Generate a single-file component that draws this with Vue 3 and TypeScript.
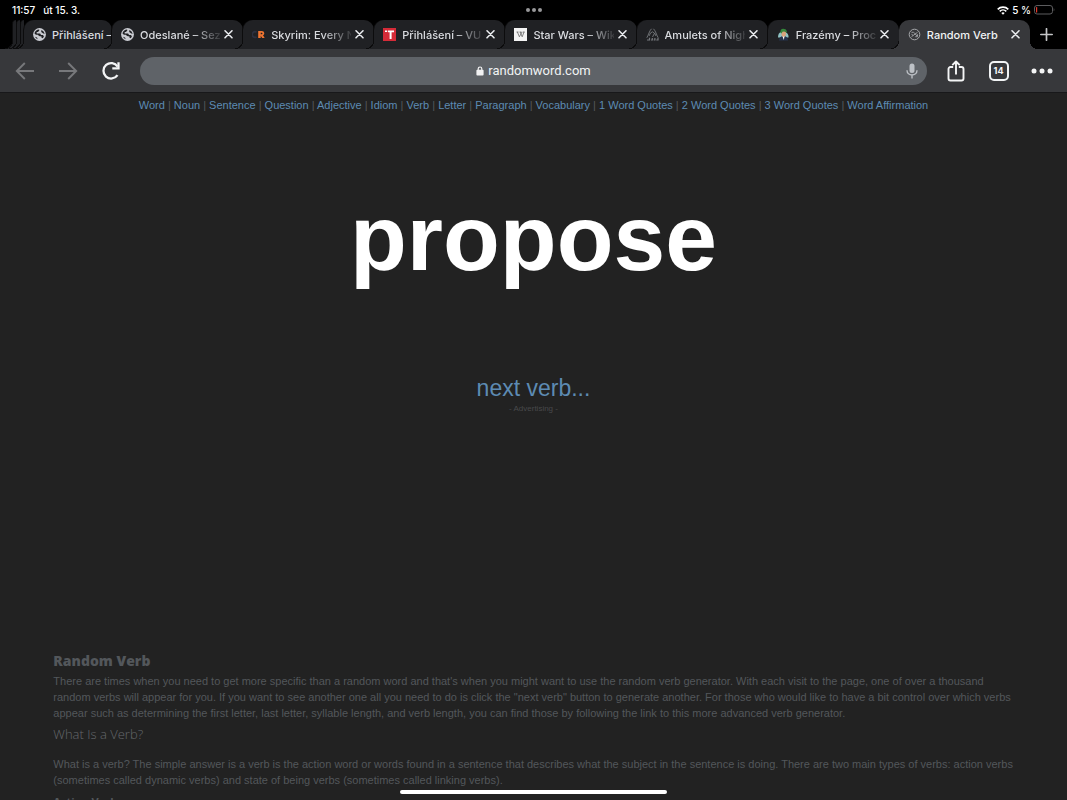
<script setup lang="ts">
import { ref } from 'vue'

interface Tab {
  id: number
  title: string
  icon: 'globe' | 'rank' | 't' | 'wiki' | 'amulet' | 'person' | 'verb'
}

const tabs: Tab[] = [
  { id: 1, title: 'Přihlášení –', icon: 'globe' },
  { id: 2, title: 'Odeslané – Sez', icon: 'globe' },
  { id: 3, title: 'Skyrim: Every N', icon: 'rank' },
  { id: 4, title: 'Přihlášení – VU', icon: 't' },
  { id: 5, title: 'Star Wars – Wik', icon: 'wiki' },
  { id: 6, title: 'Amulets of Nigh', icon: 'amulet' },
  { id: 7, title: 'Frazémy – Proc', icon: 'person' },
  { id: 8, title: 'Random Verb', icon: 'verb' },
]
const activeId = ref(8)
const address = ref('randomword.com')

const links: string[] = [
  'Word', 'Noun', 'Sentence', 'Question', 'Adjective', 'Idiom', 'Verb', 'Letter', 'Paragraph',
  'Vocabulary', '1 Word Quotes', '2 Word Quotes', '3 Word Quotes', 'Word Affirmation',
]
</script>

<template>
  <div class="screen">
    <div class="status">
      <div class="status-left"><span>11:57</span><span>út 15. 3.</span></div>
      <button class="multitask" type="button" aria-label="Multitasking"><i></i><i></i><i></i></button>
      <div class="status-right">
        <svg width="12" height="9" viewBox="0 0 12 9" fill="none" stroke="#fff" stroke-width="1.6">
          <path d="M.7 3.4C3.6.4 8.4.4 11.3 3.4" />
          <path d="M2.7 5.4c1.9-1.9 4.7-1.9 6.6 0" />
          <path d="M6 8.7 4.3 6.9c1-.9 2.400-.9 3.400 0z" fill="#fff" stroke="none" />
        </svg>
        <span>5 %</span>
        <svg width="21" height="10" viewBox="0 0 21 10" fill="none">
          <rect x=".5" y=".5" width="18" height="8.500" rx="2.500" stroke="#5c5c5e" />
          <rect x="2" y="2" width="1.200" height="5.500" rx=".5" fill="#e8392c" />
          <path d="M19.700 3.300v3c.9-.3.9-2.700 0-3z" fill="#5c5c5e" />
        </svg>
      </div>
    </div>

    <div class="tabs">
      <div class="stack"><i></i><i></i><i></i></div>
      <div
        v-for="tab in tabs"
        :key="tab.id"
        class="tab"
        :class="{ active: tab.id === activeId, first: tab.id === 1 }"
      >
        <button class="tab-main" type="button" @click="activeId = tab.id">
          <svg v-if="tab.icon === 'globe'" class="fav" viewBox="0 0 13 13">
            <circle cx="6.500" cy="6.500" r="6.400" fill="#c9cbd1" />
            <path d="M1.500 5.600C1.700 3.300 3.700 1.500 6.200 1.500v1.300L4.900 4.100H3.700v1.300h2.600c1.100 0 1.600.6 1.600 1.500H9.200c1 0 1.500.6 1.700 1.600L9.800 10.200 8.500 9.700V8.400L6 8.100 4.900 6.800H2.900z" fill="#202124" />
            <path d="M8.400 1.900c1.700.7 2.900 2.100 3.200 4L9.900 5.300 8.200 3.900zM2 8.700l2 .9.700 1.600C3.500 10.800 2.600 9.900 2 8.700z" fill="#202124" />
          </svg>
          <svg v-else-if="tab.icon === 'rank'" class="fav" viewBox="0 0 13 13">
            <path d="M4.500 4.200A2.800 2.800 0 1 0 4.500 9" fill="none" stroke="#2b3040" stroke-width="1.700" />
            <path d="M6.200 3h3.600c3 0 3.200 3.600 1.200 4.300L12.700 10h-2.500L8.700 7.800V10H6.200zm2.500 1.800v1.400h1c1 0 1-1.400 0-1.400z" fill="#ee7431" />
          </svg>
          <svg v-else-if="tab.icon === 't'" class="fav" viewBox="0 0 13 13">
            <rect width="13" height="13" fill="#d52b38" />
            <path d="M2 2.500h2.200v1.600H2zM5 2.500h6v1.700H8.600V11H6.600V4.200H5z" fill="#fff" />
          </svg>
          <svg v-else-if="tab.icon === 'wiki'" class="fav" viewBox="0 0 13 13">
            <rect width="13" height="13" fill="#f4f4f4" />
            <path d="M2.500 4h2M5.500 4h2M8.700 4h2M3.400 4l2 4.800L8 4M6.200 4l2 4.800L10 4" fill="none" stroke="#666" stroke-width=".8" />
          </svg>
          <svg v-else-if="tab.icon === 'amulet'" class="fav" viewBox="0 0 13 13" fill="none" stroke="#777a7e" stroke-width=".9">
            <path d="M5.500.8C3.300 3 2.500 7 .8 9.800M7.500.8c2.200 2.200 3 6.200 4.700 9M4.500 5l2-1.200 2 1.500L6.500 9M3 8l1.500-3M8.500 5 10 8" />
            <path d="M1 12h2.500V9.800M5 12h1.300v-2M7.700 12h1.200v-2M10.300 12h1.700v-2" stroke-width="1.200" />
          </svg>
          <svg v-else-if="tab.icon === 'person'" class="fav" viewBox="0 0 13 13">
            <path d="M1 9.500c0-3 1-5 3-5.500l5 .5c1.800 1 2.700 2.500 2.500 5z" fill="#8fc3c4" />
            <path d="M2 12.500c0-3 2-4.500 4.500-4.500S11 9.500 11 12.500z" fill="#25324a" />
            <path d="M5.400 8h2.200L6.800 12z" fill="#fff" />
            <ellipse cx="6.700" cy="5.800" rx="2.300" ry="3" fill="#d9a47c" />
            <path d="M3.500 4.800C2.800 1.700 5 .3 7 .9c2-.2 3.200 1.600 2.800 4.100L8.700 3.700 5.700 3.400 4.500 5.500z" fill="#35863b" />
          </svg>
          <svg v-else class="fav" viewBox="0 0 13 13" fill="none" stroke="#a5a7aa">
            <circle cx="6.500" cy="6.500" r="5.300" />
            <path d="M3.500 4.300h2.200M9.500 4.300 3.500 8.700M3.500 6.300l1.500 1M9.500 6.300v2.400H7.300M6 4.500l3 3.500" stroke-width=".9" />
          </svg>
          <span class="title">{{ tab.title }}</span>
        </button>
        <button v-if="tab.id !== 1" class="close" type="button" :aria-label="'Close ' + tab.title">
          <svg width="11" height="11" viewBox="0 0 11 11" stroke="currentColor" stroke-width="1.600" stroke-linecap="round">
            <path d="M2 1.800l7 7M9 1.800l-7 7" />
          </svg>
        </button>
      </div>
      <button class="plus" type="button" aria-label="New tab">
        <svg width="13" height="13" viewBox="0 0 13 13" stroke="#c4c5c7" stroke-width="1.700" stroke-linecap="round">
          <path d="M6.500.8v11.400M.8 6.500h11.400" />
        </svg>
      </button>
    </div>

    <div class="toolbar">
      <button class="tool dim" type="button" aria-label="Back">
        <svg width="20" height="18" viewBox="0 0 20 18" fill="none" stroke="currentColor" stroke-width="1.900">
          <path d="M9.800 1 1.800 9l8 8M1.800 9H19" />
        </svg>
      </button>
      <button class="tool dim" type="button" aria-label="Forward">
        <svg width="20" height="18" viewBox="0 0 20 18" fill="none" stroke="currentColor" stroke-width="1.900">
          <path d="M10.200 1l8 8-8 8M18.200 9H1" />
        </svg>
      </button>
      <button class="tool" type="button" aria-label="Reload">
        <svg width="20" height="20" viewBox="0 0 20 20" fill="none" stroke="currentColor" stroke-width="2.300">
          <path d="M16.600 5.600A7.700 7.700 0 1 0 16.500 14.200" />
          <path d="M17.500 1.300v6.100h-6.200" />
        </svg>
      </button>
      <form class="omnibox" @submit.prevent>
        <svg width="8" height="10" viewBox="0 0 8 10">
          <path d="M2.200 4.500V2.800a1.800 1.800 0 0 1 3.600 0v1.700" fill="none" stroke="#f1f1f2" stroke-width="1.200" />
          <rect x=".4" y="3.800" width="7.200" height="5.700" rx="1" fill="#f1f1f2" />
        </svg>
        <input v-model="address" type="text" aria-label="Address" />
        <button class="mic" type="button" aria-label="Voice search">
          <svg width="12" height="16" viewBox="0 0 12 16" fill="none" stroke="#bdc1c6" stroke-width="1.400">
            <rect x="3.500" y=".5" width="5" height="9.500" rx="2.500" fill="#bdc1c6" stroke="none" />
            <path d="M1 7.300c0 6.200 10 6.200 10 0M6 12v3.500" />
          </svg>
        </button>
      </form>
      <button class="tool" type="button" aria-label="Share">
        <svg width="18" height="22" viewBox="0 0 18 22" fill="none" stroke="currentColor" stroke-width="1.900" stroke-linejoin="round">
          <path d="M6.200 7H3.500a2 2 0 0 0-2 2v9.500a2 2 0 0 0 2 2h11a2 2 0 0 0 2-2V9a2 2 0 0 0-2-2h-2.700M9 14.500V2M5.300 5.200 9 1.500l3.700 3.700" />
        </svg>
      </button>
      <button class="tool" type="button" aria-label="Open tabs"><span class="count">14</span></button>
      <button class="tool" type="button" aria-label="Menu">
        <svg width="22" height="6" viewBox="0 0 22 6" fill="currentColor">
          <circle cx="3" cy="3" r="2.500" /><circle cx="11" cy="3" r="2.500" /><circle cx="19" cy="3" r="2.500" />
        </svg>
      </button>
    </div>

    <main class="page">
      <nav class="links">
        <template v-for="(link, i) in links" :key="link"><span v-if="i > 0"> | </span><a href="#">{{ link }}</a></template>
      </nav>
      <div class="word">propose</div>
      <a class="next" href="#">next verb...</a>
      <div class="ad">- Advertising -</div>
      <article class="about">
        <h2>Random Verb</h2>
        <p>There are times when you need to get more specific than a random word and that's when you might want to use the random verb generator. With each visit to the page, one of over a thousand random verbs will appear for you. If you want to see another one all you need to do is click the "next verb" button to generate another. For those who would like to have a bit control over which verbs appear such as determining the first letter, last letter, syllable length, and verb length, you can find those by following the link to this more advanced verb generator.</p>
        <h3>What Is a Verb?</h3>
        <p>What is a verb? The simple answer is a verb is the action word or words found in a sentence that describes what the subject in the sentence is doing. There are two main types of verbs: action verbs (sometimes called dynamic verbs) and state of being verbs (sometimes called linking verbs).</p>
        <h4>Action Verbs</h4>
      </article>
    </main>
    <div class="home-bar"></div>
  </div>
</template>

<style>
body {
  margin: 0;
  background: #222;
}
</style>

<style scoped>
.screen {
  position: relative;
  display: flex;
  flex-direction: column;
  height: 100vh;
  overflow: hidden;
  background: #222;
  font-family: Inter, Roboto, sans-serif;
  color: #e8eaed;
}
button {
  display: flex;
  align-items: center;
  justify-content: center;
  padding: 0;
  border: 0;
  background: none;
  color: inherit;
  font: inherit;
}
svg {
  flex: none;
}
.status {
  display: grid;
  grid-template-columns: 1fr auto 1fr;
  align-items: center;
  flex: none;
  height: 20px;
  padding: 0 12px;
  background: #000;
  font-size: 10px;
  line-height: 12px;
  font-weight: 500;
  color: #fff;
}
.status-left,
.status-right {
  display: flex;
  align-items: center;
}
.status-left {
  gap: 8px;
}
.status-right {
  justify-content: flex-end;
  gap: 3px;
}
.multitask {
  gap: 2px;
}
.multitask i {
  width: 4px;
  height: 4px;
  border-radius: 50%;
  background: #98989a;
}
.tabs {
  display: flex;
  flex: none;
  height: 29px;
  background: #000;
}
.stack {
  display: flex;
  width: 24px;
  padding-left: 12px;
  box-sizing: border-box;
}
.stack i {
  position: relative;
  flex: 1;
  border-left: 1px solid #0c0c0d;
  border-top-left-radius: 10px;
  background: #202124;
}
.tab {
  --fill: #202124;
  position: relative;
  display: flex;
  flex: 1 1 0;
  min-width: 0;
  box-sizing: border-box;
  padding: 0 9px;
  border-radius: 10px 10px 0 0;
  background: var(--fill);
  box-shadow: -1px 0 0 #0c0c0d;
}
.tab::before,
.stack i::before,
.tab.active::after {
  content: '';
  position: absolute;
  bottom: 0;
  width: 8px;
  height: 8px;
}
.tab::before,
.stack i::before {
  right: 100%;
  background: radial-gradient(circle at 0 0, transparent 7px, #0c0c0d 7px, #0c0c0d 8px, var(--fill, #202124) 8px);
}
.tab.active::after {
  left: 100%;
  background: radial-gradient(circle at 100% 0, transparent 8px, var(--fill) 8px);
}
.tab.first {
  flex: 0 0 88px;
  padding-right: 0;
}
.tab.active {
  --fill: #37383b;
  box-shadow: none;
}
.tab-main {
  flex: 1;
  min-width: 0;
  gap: 6px;
}
.fav {
  width: 13px;
  height: 13px;
}
.title {
  flex: 1;
  overflow: hidden;
  white-space: nowrap;
  text-align: left;
  font-size: 11px;
  line-height: 20px;
  font-weight: 500;
  color: #dadce0;
  mask-image: linear-gradient(to right, #000 65%, transparent 105%);
}
.first .title,
.active .title {
  mask-image: none;
}
.active .title {
  color: #f1f3f4;
}
.close {
  width: 11px;
  margin-left: 3px;
}
.plus {
  width: 37px;
  padding-right: 4px;
}
.toolbar {
  display: flex;
  align-items: center;
  flex: none;
  height: 44px;
  padding: 0 4px 0 3px;
  background: #37383b;
  border-bottom: 1px solid #18181a;
  box-sizing: border-box;
}
.tool {
  width: 43px;
  height: 43px;
  color: #f4f5f6;
}
.dim {
  color: #77787b;
}
.omnibox {
  position: relative;
  display: flex;
  flex: 1;
  align-items: center;
  justify-content: center;
  gap: 4px;
  height: 28px;
  margin: 0 7px 0 8px;
  border-radius: 14px;
  background: #5f6368;
}
.omnibox input {
  field-sizing: content;
  padding: 0;
  border: 0;
  outline: 0;
  background: none;
  color: #f1f3f4;
  font: 400 13px/20px Roboto, sans-serif;
}
.mic {
  position: absolute;
  right: 8px;
  width: 14px;
  height: 28px;
}
.count {
  display: grid;
  place-items: center;
  width: 20px;
  height: 20px;
  box-sizing: border-box;
  border: 2px solid #f1f3f4;
  border-radius: 5px;
  font-size: 9px;
  font-weight: 700;
}
.page {
  display: flex;
  flex: 1;
  flex-direction: column;
  align-items: center;
  min-height: 0;
  padding-top: 4px;
  background: #222;
  font-family: 'Liberation Sans', Arial, sans-serif;
}
.page a {
  color: #5d8bb3;
  text-decoration: none;
}
.links {
  font-size: 11px;
  line-height: 16px;
  color: #55585b;
}
.word {
  margin-top: 78px;
  font-size: 93px;
  line-height: 94px;
  font-weight: 700;
  color: #fff;
}
.page .next {
  margin-top: 89px;
  font-size: 23px;
  line-height: 28px;
}
.ad {
  margin-top: 1px;
  font-size: 8px;
  line-height: 12px;
  color: #48494b;
}
.about {
  width: 100%;
  margin-top: 236px;
  padding: 0 48px 0 5%;
  box-sizing: border-box;
  color: #53575b;
}
.about h2,
.about h3,
.about h4 {
  margin: 0;
  font-family: 'Open Sans', 'Noto Sans', sans-serif;
  line-height: 20px;
}
.about h2 {
  font-size: 14px;
  font-weight: 800;
}
.about h3 {
  margin-top: 3px;
  font-size: 13px;
  font-weight: 300;
  color: #65686c;
}
.about h4 {
  margin-top: 4px;
  font-size: 11px;
  font-weight: 700;
}
.about p {
  margin: 2px 0 0;
  font-size: 11px;
  line-height: 16px;
}
.about h3 + p {
  margin-top: 12px;
}
.home-bar {
  position: absolute;
  bottom: 6px;
  left: 50%;
  width: 25%;
  height: 4px;
  margin-left: -12.5%;
  border-radius: 2px;
  background: #fff;
}
</style>
